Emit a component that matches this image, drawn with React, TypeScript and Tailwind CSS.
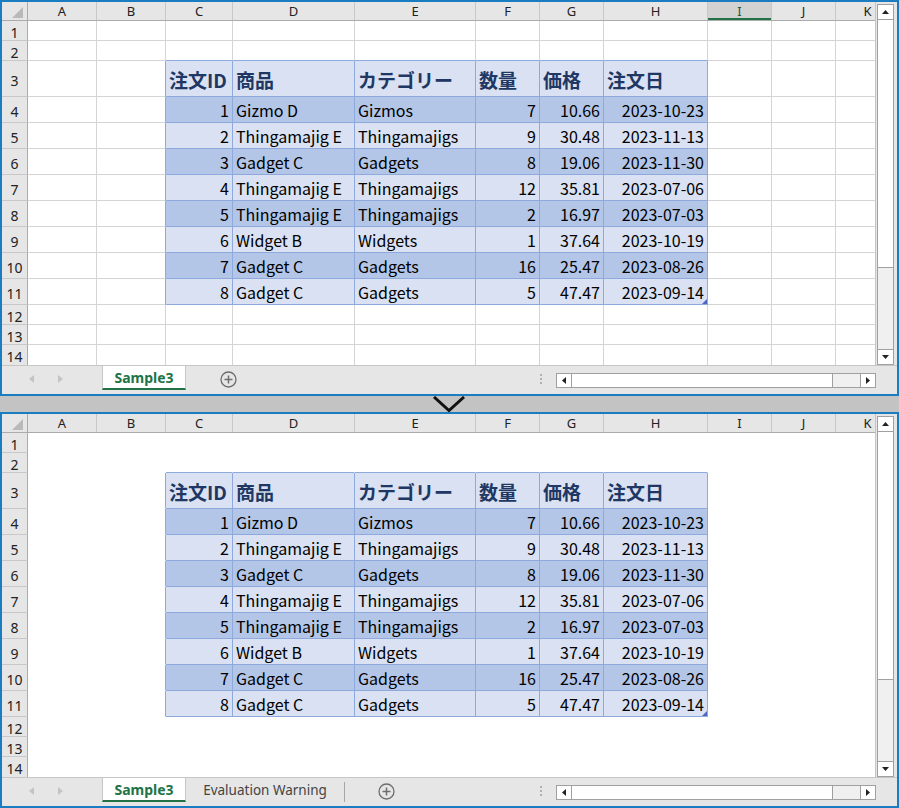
import React from 'react'

// Column layout of the sheet (widths include the right border)
const COLS = [
  { l: 'A', w: 'w-[69px]' },
  { l: 'B', w: 'w-[69px]' },
  { l: 'C', w: 'w-[67px]' },
  { l: 'D', w: 'w-[122px]' },
  { l: 'E', w: 'w-[121px]' },
  { l: 'F', w: 'w-[64px]' },
  { l: 'G', w: 'w-[64px]' },
  { l: 'H', w: 'w-[104px]' },
  { l: 'I', w: 'w-[64px]' },
  { l: 'J', w: 'w-[64px]' },
  { l: 'K', w: 'w-[64px]' },
]

const ROW_H = [
  'h-[20px]', 'h-[20px]', 'h-[36px]',
  'h-[26px]', 'h-[26px]', 'h-[26px]', 'h-[26px]',
  'h-[26px]', 'h-[26px]', 'h-[26px]', 'h-[26px]',
  'h-[20px]', 'h-[20px]', 'h-[21px]',
]

const HEADERS = ['注文ID', '商品', 'カテゴリー', '数量', '価格', '注文日']

const ORDERS = [
  ['1', 'Gizmo D', 'Gizmos', '7', '10.66', '2023-10-23'],
  ['2', 'Thingamajig E', 'Thingamajigs', '9', '30.48', '2023-11-13'],
  ['3', 'Gadget C', 'Gadgets', '8', '19.06', '2023-11-30'],
  ['4', 'Thingamajig E', 'Thingamajigs', '12', '35.81', '2023-07-06'],
  ['5', 'Thingamajig E', 'Thingamajigs', '2', '16.97', '2023-07-03'],
  ['6', 'Widget B', 'Widgets', '1', '37.64', '2023-10-19'],
  ['7', 'Gadget C', 'Gadgets', '16', '25.47', '2023-08-26'],
  ['8', 'Gadget C', 'Gadgets', '5', '47.47', '2023-09-14'],
]

const RIGHT_ALIGNED = [2, 5, 6, 7]

function Cell({ r, c, gridlines }: { r: number; c: number; gridlines: boolean }) {
  const inTable = r >= 2 && r <= 10 && c >= 2 && c <= 7
  const edgeRight = inTable || (c === 1 && r >= 2 && r <= 10)
  const edgeBottom = inTable || (r === 1 && c >= 2 && c <= 7)
  const plain = gridlines ? 'border-[#d4d4d4]' : 'border-transparent'

  let bg = 'bg-white'
  if (r === 2 && inTable) bg = 'bg-[#d9e1f2]'
  else if (inTable) bg = (r - 3) % 2 === 0 ? 'bg-[#b4c6e7]' : 'bg-[#d9e1f2]'

  let content: React.ReactNode = null
  if (inTable && r === 2) {
    content = (
      <span className="px-[3px] pb-[4px] text-[19px] leading-[24px] font-bold text-[#203764]">
        {HEADERS[c - 2]}
      </span>
    )
  } else if (inTable) {
    content = (
      <span className="px-[3px] pb-[2px] text-[16px] leading-[20px] text-black">
        {ORDERS[r - 3][c - 2]}
      </span>
    )
  }

  const isLast = r === 10 && c === 7
  const align = inTable && r > 2 && RIGHT_ALIGNED.includes(c) ? 'justify-end' : 'justify-start'

  return (
    <div
      className={`relative shrink-0 ${COLS[c].w} h-full flex items-end ${align} overflow-hidden whitespace-nowrap border-r border-b ${bg} ${edgeRight ? 'border-r-[#8ea9db]' : ''} ${edgeBottom ? 'border-b-[#8ea9db]' : ''} ${plain} font-['Noto_Sans_CJK_JP',sans-serif]`}
    >
      {content}
      {isLast && (
        <svg className="absolute right-0 bottom-0" width="5" height="5" viewBox="0 0 5 5">
          <polygon points="5,0 5,5 0,5" fill="#4a67c2" />
        </svg>
      )}
    </div>
  )
}

function VScroll() {
  return (
    <div className="w-[22px] shrink-0 h-full bg-[#e6e6e6] border-l border-[#c6c6c6] pl-[1px] pt-[2px]">
      <div className="w-[17px] h-[361px] border border-[#a0a0a0] bg-[#f0f0f0] flex flex-col">
        <div className="h-[15px] shrink-0 bg-white border-b border-[#a0a0a0] flex items-center justify-center">
          <svg width="7" height="4" viewBox="0 0 7 4"><polygon points="0,4 3.5,0 7,4" fill="#222" /></svg>
        </div>
        <div className="h-[248px] shrink-0 bg-white border-b border-[#a0a0a0]" />
        <div className="flex-1" />
        <div className="h-[15px] shrink-0 bg-white border-t border-[#a0a0a0] flex items-center justify-center">
          <svg width="7" height="4" viewBox="0 0 7 4"><polygon points="0,0 7,0 3.5,4" fill="#222" /></svg>
        </div>
      </div>
    </div>
  )
}

function HScroll() {
  return (
    <div className="w-[320px] h-[15px] border border-[#a0a0a0] bg-[#f0f0f0] flex">
      <div className="w-[15px] shrink-0 bg-white border-r border-[#a0a0a0] flex items-center justify-center">
        <svg width="4" height="7" viewBox="0 0 4 7"><polygon points="4,0 0,3.5 4,7" fill="#222" /></svg>
      </div>
      <div className="w-[261px] shrink-0 bg-white border-r border-[#a0a0a0]" />
      <div className="flex-1" />
      <div className="w-[15px] shrink-0 bg-white border-l border-[#a0a0a0] flex items-center justify-center">
        <svg width="4" height="7" viewBox="0 0 4 7"><polygon points="0,0 4,3.5 0,7" fill="#222" /></svg>
      </div>
    </div>
  )
}

function PlusCircle() {
  return (
    <svg width="17" height="17" viewBox="0 0 17 17" className="shrink-0">
      <circle cx="8.5" cy="8.5" r="7.5" fill="none" stroke="#6d6d6d" strokeWidth="1.3" />
      <path d="M8.5 4.5v8M4.5 8.5h8" stroke="#6d6d6d" strokeWidth="1.5" />
    </svg>
  )
}

function TabBar({ warning }: { warning: boolean }) {
  return (
    <div className="h-[29px] shrink-0 bg-[#e6e6e6] border-t border-[#c6c6c6] flex items-start font-['Noto_Sans',sans-serif]">
      <div className="w-[100px] h-[26px] shrink-0 flex items-center">
        <svg width="5" height="8" viewBox="0 0 5 8" className="ml-[27px]"><polygon points="5,0 0,4 5,8" fill="#c4c4c4" /></svg>
        <svg width="5" height="8" viewBox="0 0 5 8" className="ml-[24px]"><polygon points="0,0 5,4 0,8" fill="#c4c4c4" /></svg>
      </div>
      <div className="w-[84px] h-[24px] shrink-0 bg-white border-x border-[#c6c6c6] border-b-2 border-b-[#217346] flex items-center justify-center text-[14px] font-bold text-[#217346]">
        Sample3
      </div>
      {warning && (
        <>
          <div className="w-[158px] h-[24px] shrink-0 flex items-center justify-center text-[13.5px] text-[#444]">
            Evaluation Warning
          </div>
          <div className="w-px h-[20px] mt-[4px] bg-[#a6a6a6] shrink-0" />
        </>
      )}
      <div className={`h-[26px] flex items-center ${warning ? 'ml-[33px]' : 'ml-[34px]'}`}>
        <PlusCircle />
      </div>
      <div className="flex-1" />
      <div className="h-[26px] flex flex-col justify-center gap-[2px] mr-[14px]">
        <div className="w-[2px] h-[2px] bg-[#b0b0b0]" />
        <div className="w-[2px] h-[2px] bg-[#b0b0b0]" />
        <div className="w-[2px] h-[2px] bg-[#b0b0b0]" />
      </div>
      <div className="mt-[7px] mr-[21px]">
        <HScroll />
      </div>
    </div>
  )
}

function Sheet({ gridlines, selectedCol, warning }: { gridlines: boolean; selectedCol?: string; warning: boolean }) {
  return (
    <div className="h-[396px] shrink-0 border-2 border-[#1a7dc2] bg-white flex flex-col">
      <div className="h-[363px] shrink-0 flex">
        <div className="w-[873px] shrink-0 overflow-hidden">
          {/* column letters */}
          <div className="h-[19px] flex bg-[#e6e6e6] border-b border-[#ababab] font-['Noto_Sans',sans-serif] text-[13px] leading-[18px] text-[#222]">
            <div className="w-[26px] shrink-0 border-r border-[#ababab] flex items-end justify-end pr-[4px] pb-[2px]">
              <svg width="11" height="11" viewBox="0 0 11 11"><polygon points="11,0 11,11 0,11" fill="#b9b9b9" /></svg>
            </div>
            {COLS.map((col) => {
              const sel = col.l === selectedCol
              return (
                <div
                  key={col.l}
                  className={`relative ${col.w} shrink-0 flex items-center justify-center border-r border-[#c8c8c8] ${sel ? 'bg-[#d2d2d2] text-[#1d5b38]' : ''}`}
                >
                  {col.l}
                  {sel && <div className="absolute left-0 right-0 bottom-0 h-[2px] bg-[#217346]" />}
                </div>
              )
            })}
          </div>
          {ROW_H.map((h, r) => (
            <div key={r} className={`${h} flex`}>
              <div className="w-[26px] shrink-0 bg-[#e6e6e6] border-r border-r-[#ababab] border-b border-b-[#c8c8c8] flex items-center justify-center pt-[3px] font-['Noto_Sans',sans-serif] text-[14px] text-[#222]">
                {r + 1}
              </div>
              {COLS.map((col, c) => (
                <Cell key={col.l} r={r} c={c} gridlines={gridlines} />
              ))}
            </div>
          ))}
        </div>
        <VScroll />
      </div>
      <TabBar warning={warning} />
    </div>
  )
}

export default function App() {
  return (
    <div className="w-[899px] h-[808px] bg-[#c3c3c3] flex flex-col overflow-hidden">
      <Sheet gridlines selectedCol="I" warning={false} />
      <div className="h-[16px] shrink-0 flex justify-center">
        <svg width="34" height="16" viewBox="0 0 34 16" className="ml-[-2px]">
          <polyline points="2,1 17,14.5 32,1" fill="none" stroke="#111" strokeWidth="3" />
        </svg>
      </div>
      <Sheet gridlines={false} warning />
    </div>
  )
}
